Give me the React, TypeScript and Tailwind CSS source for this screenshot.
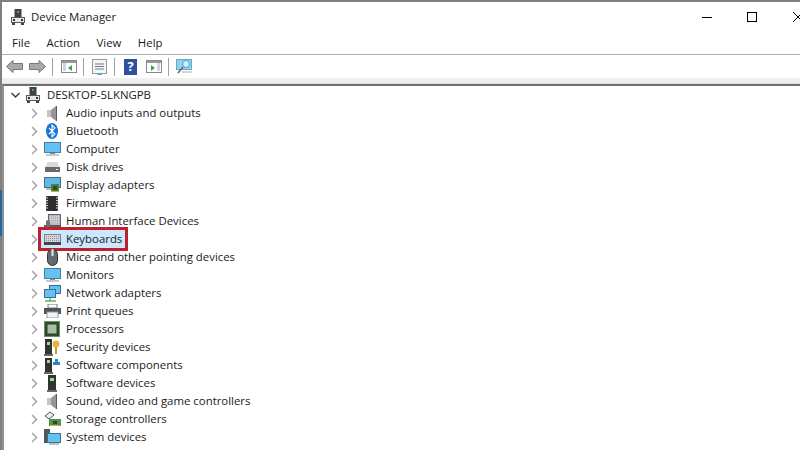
import type { ReactNode } from 'react';

function Chevron({ open }: { open?: boolean }) {
  return (
    <svg width="9" height="11" viewBox="0 0 9 11" fill="none" stroke={open ? '#404040' : '#a6a6a6'} strokeWidth="1.5">
      {open ? <path d="M0.5 3l4 4 4-4" /> : <path d="M2 1l4.5 4.5L2 10" />}
    </svg>
  );
}

function Pc() {
  return (
    <svg width="14" height="16" viewBox="0 0 14 16">
      <rect x="3.500" y="0" width="7" height="8" fill="#3c423c" />
      <rect x="6" y="2" width="2" height="2" fill="#6f8f6f" />
      <rect x="0.500" y="8.500" width="13" height="5" fill="#e6e6e6" stroke="#5a5a5a" />
      <rect x="2" y="10" width="2" height="2" fill="#333" />
      <rect x="10" y="10" width="2" height="2" fill="#333" />
      <rect x="1" y="14" width="3" height="2" fill="#444" />
      <rect x="10" y="14" width="3" height="2" fill="#444" />
    </svg>
  );
}

function DeviceIcon({ name }: { name: string }) {
  switch (name) {
    case 'audio':
    case 'sound':
      return (
        <svg width="12" height="17" viewBox="0 0 12 17">
          <rect x="1" y="5" width="4" height="7" fill="#c4c4c4" />
          <path d="M5 5l5-4v15l-5-4z" fill="#969696" />
          <path d="M10 1h1v15h-1z" fill="#5c5c5c" />
        </svg>
      );
    case 'bluetooth':
      return (
        <svg width="14" height="16" viewBox="0 0 14 16">
          <ellipse cx="7" cy="8" rx="6" ry="8" fill="#1474d4" />
          <path d="M4 5l6 6-3 3V2l3 3-6 6" fill="none" stroke="#fff" strokeWidth="1.1" />
        </svg>
      );
    case 'computer':
    case 'monitor':
      return (
        <svg width="17" height="14" viewBox="0 0 17 14">
          <rect x="0.500" y="0.500" width="16" height="10" fill="#63c2f3" stroke="#4a7c9c" />
          <rect x="6" y="11" width="5" height="1" fill="#888" />
          <rect x="2" y="12" width="13" height="2" fill="#c4cacd" />
        </svg>
      );
    case 'disk':
      return (
        <svg width="15" height="11" viewBox="0 0 15 11">
          <path d="M0.500 5l2-5h10l2 5z" fill="#dadada" />
          <rect x="0" y="5" width="15" height="5" fill="#6a6a6a" />
          <rect x="11" y="7" width="2" height="1" fill="#e8f8e8" />
        </svg>
      );
    case 'display':
      return (
        <svg width="17" height="16" viewBox="0 0 17 16">
          <rect x="0.500" y="0.500" width="16" height="10" fill="#5fb9e6" stroke="#3f7088" />
          <rect x="2" y="11" width="6" height="2" fill="#bbb" />
          <rect x="7" y="7" width="8" height="8" fill="#4f7f3f" />
          <rect x="9" y="9" width="4" height="4" fill="#2f4a22" />
          <rect x="7" y="14" width="8" height="1" fill="#c9a94a" />
        </svg>
      );
    case 'firmware':
      return (
        <svg width="14" height="15" viewBox="0 0 14 15">
          <rect x="1" y="0" width="12" height="15" rx="1" fill="#2e2e2e" />
          <path d="M1 2h2M1 4.500h2M1 7h2M1 9.500h2M1 12h2M11 2h2M11 4.500h2M11 7h2M11 9.500h2M11 12h2" stroke="#d8d8d8" />
        </svg>
      );
    case 'hid':
      return (
        <svg width="17" height="15" viewBox="0 0 17 15">
          <rect x="4.500" y="0.500" width="12" height="11" fill="#b4b9c0" stroke="#666" />
          <path d="M6 3h9M6 5.500h9M6 8h9" stroke="#eee" strokeDasharray="1 1" />
          <rect x="0" y="11" width="17" height="4" fill="#5a5a5a" />
          <rect x="2" y="6" width="4" height="8" rx="2" fill="#6f6f6f" />
        </svg>
      );
    case 'keyboard':
      return (
        <svg width="17" height="11" viewBox="0 0 17 11">
          <rect x="0.500" y="0.500" width="16" height="9" fill="#d4d7da" stroke="#808080" />
          <path d="M2 2.500h13M2 4.500h13M2 6.500h13" stroke="#8c9096" strokeDasharray="1 1" />
          <rect x="0" y="8" width="17" height="3" fill="#444" />
        </svg>
      );
    case 'mouse':
      return (
        <svg width="11" height="17" viewBox="0 0 11 17">
          <rect x="0.500" y="0.500" width="10" height="16" rx="5" fill="#646a70" stroke="#333" />
          <rect x="4.500" y="0" width="2" height="7" fill="#e8e8e8" />
        </svg>
      );
    case 'network':
      return (
        <svg width="17" height="17" viewBox="0 0 17 17">
          <rect x="5.500" y="0.500" width="11" height="8" fill="#63c2f3" stroke="#3c6f8f" />
          <rect x="0.500" y="4.500" width="11" height="8" fill="#63c2f3" stroke="#3c6f8f" />
          <path d="M6 13v3M1 16h11" stroke="#5bb85b" strokeWidth="1.500" />
        </svg>
      );
    case 'print':
      return (
        <svg width="17" height="14" viewBox="0 0 17 14">
          <rect x="4" y="0" width="9" height="4" fill="#fff" stroke="#777" />
          <rect x="0" y="4" width="17" height="6" fill="#4a5560" />
          <rect x="3" y="8" width="11" height="6" fill="#f4f4f4" stroke="#999" />
        </svg>
      );
    case 'processor':
      return (
        <svg width="16" height="16" viewBox="0 0 16 16">
          <rect x="0.500" y="0.500" width="15" height="15" fill="#2f4f2f" stroke="#6f8f5f" />
          <rect x="3" y="3" width="10" height="10" fill="#a9c0a0" stroke="#2f3f2f" />
        </svg>
      );
    case 'security':
      return (
        <svg width="16" height="17" viewBox="0 0 16 17">
          <rect x="1" y="0" width="7" height="15" fill="#333" />
          <rect x="3" y="3" width="3" height="3" fill="#8fe08f" />
          <rect x="0" y="15" width="9" height="2" fill="#666" />
          <circle cx="12" cy="5" r="3.500" fill="#e3b53c" />
          <rect x="11" y="8" width="2" height="7" fill="#c99a2e" />
        </svg>
      );
    case 'component':
      return (
        <svg width="16" height="17" viewBox="0 0 16 17">
          <rect x="1" y="1" width="7" height="14" fill="#333" />
          <rect x="3" y="3" width="3" height="3" fill="#8fe08f" />
          <rect x="0" y="15" width="9" height="2" fill="#666" />
          <path d="M9 5h7v3H9zM11 2h3v3h-3z" fill="#2d82c9" />
        </svg>
      );
    case 'software':
      return (
        <svg width="10" height="17" viewBox="0 0 10 17">
          <rect x="1" y="0" width="8" height="15" fill="#333" />
          <rect x="3" y="3" width="4" height="3" fill="#8fe08f" />
          <rect x="0" y="15" width="10" height="2" fill="#666" />
        </svg>
      );
    case 'storage':
      return (
        <svg width="17" height="16" viewBox="0 0 17 16">
          <path d="M1 5l5-4 4 3-5 4z" fill="#eee" stroke="#555" />
          <rect x="5" y="8" width="12" height="7" fill="#4f8f4f" />
          <rect x="9" y="10" width="4" height="3" fill="#2f4a22" />
          <rect x="6" y="14" width="10" height="1" fill="#d4b04a" />
        </svg>
      );
    default:
      return (
        <svg width="17" height="16" viewBox="0 0 17 16">
          <rect x="0" y="0" width="6" height="14" fill="#555" />
          <rect x="3.500" y="4.500" width="13" height="9" fill="#63c2f3" stroke="#3c6f8f" />
          <rect x="5" y="14" width="10" height="2" fill="#b9c0c4" />
        </svg>
      );
  }
}

const devices = [
  ['audio', 'Audio inputs and outputs'],
  ['bluetooth', 'Bluetooth'],
  ['computer', 'Computer'],
  ['disk', 'Disk drives'],
  ['display', 'Display adapters'],
  ['firmware', 'Firmware'],
  ['hid', 'Human Interface Devices'],
  ['keyboard', 'Keyboards'],
  ['mouse', 'Mice and other pointing devices'],
  ['monitor', 'Monitors'],
  ['network', 'Network adapters'],
  ['print', 'Print queues'],
  ['processor', 'Processors'],
  ['security', 'Security devices'],
  ['component', 'Software components'],
  ['software', 'Software devices'],
  ['sound', 'Sound, video and game controllers'],
  ['storage', 'Storage controllers'],
  ['system', 'System devices'],
];

function ToolBtn({ children }: { children: ReactNode }) {
  return <div className="flex h-[24px] w-[23px] items-center justify-center">{children}</div>;
}

function Sep() {
  return <div className="mr-[4px] ml-[3px] h-[18px] w-px bg-[#a0a0a0]" />;
}

export default function App() {
  return (
    <div className="flex h-[450px] w-[800px] overflow-hidden bg-white font-['Open_Sans',sans-serif] text-[11.400px] text-[#1a1a1a]">
      {/* Edge of the window with the desktop behind it */}
      <div className="flex w-[2px] shrink-0 flex-col bg-[#808080]">
        <div className="h-[190px] shrink-0" />
        <div className="h-[46px] shrink-0 bg-[#1f6aa5]" />
      </div>
      <div className="flex min-w-0 flex-1 flex-col border-t-2 border-t-[#808080]">
        {/* Title bar */}
        <div className="flex h-[30px] shrink-0 items-center pl-[9px]">
          <Pc />
          <span className="ml-[6px]">Device Manager</span>
          <div className="ml-auto flex items-center">
            <div className="mr-[35px] h-px w-[10px] bg-black" />
            <div className="mr-[36px] h-[10px] w-[10px] border border-black" />
            <svg width="10" height="10" viewBox="0 0 10 10" stroke="#000" fill="none" className="mr-[-3px]">
              <path d="M0 0l10 10M10 0L0 10" />
            </svg>
          </div>
        </div>
        {/* Menu */}
        <div className="flex h-[23px] shrink-0 items-center gap-[16.500px] border-b border-b-[#b0b0b0] pl-[10px]">
          <span>File</span>
          <span>Action</span>
          <span>View</span>
          <span>Help</span>
        </div>
        {/* Toolbar */}
        <div className="flex h-[23px] shrink-0 items-center pl-[1px]">
          <ToolBtn>
            <svg width="17" height="13" viewBox="0 0 17 13">
              <path d="M0.500 6.500L7 0.500v3h9.500v6H7v3z" fill="#a8a8a8" stroke="#777" />
            </svg>
          </ToolBtn>
          <ToolBtn>
            <svg width="17" height="13" viewBox="0 0 17 13">
              <path d="M16.500 6.500L10 0.500v3H0.500v6H10v3z" fill="#a8a8a8" stroke="#777" />
            </svg>
          </ToolBtn>
          <Sep />
          <ToolBtn>
            <svg width="16" height="13" viewBox="0 0 16 13">
              <rect x="0.500" y="0.500" width="15" height="12" fill="#fff" stroke="#888" />
              <rect x="1" y="1" width="14" height="2" fill="#999" />
              <path d="M5 4h-3M5 6h-3M5 8h-3M5 10h-3" stroke="#9ab" />
              <path d="M11 5v6L7 8z" fill="#3fa34d" />
            </svg>
          </ToolBtn>
          <Sep />
          <ToolBtn>
            <svg width="15" height="16" viewBox="0 0 15 16">
              <rect x="0.500" y="0.500" width="14" height="14" fill="#f5f5f5" stroke="#999" />
              <path d="M3 5h9M3 7.500h9M3 10h9" stroke="#778" />
              <rect x="5" y="14" width="5" height="2" fill="#4fb0d0" />
            </svg>
          </ToolBtn>
          <Sep />
          <ToolBtn>
            <div className="flex h-[16px] w-[13px] items-center justify-center bg-[#2f4f9f] text-[13px] font-bold text-white">?</div>
          </ToolBtn>
          <ToolBtn>
            <svg width="16" height="13" viewBox="0 0 16 13">
              <rect x="0.500" y="0.500" width="15" height="12" fill="#fff" stroke="#888" />
              <rect x="1" y="1" width="14" height="2" fill="#999" />
              <path d="M14 4h-3M14 6h-3M14 8h-3M14 10h-3" stroke="#9ab" />
              <path d="M5 5v6l4-3z" fill="#3fa34d" />
            </svg>
          </ToolBtn>
          <Sep />
          <ToolBtn>
            <svg width="17" height="16" viewBox="0 0 17 16">
              <rect x="0.500" y="0.500" width="15" height="10" fill="#8fd3f4" stroke="#6aa8c8" />
              <circle cx="10" cy="5" r="3.500" fill="#cdeefc" stroke="#5a9ac0" />
              <path d="M7 8L2 14" stroke="#666" strokeWidth="1.500" />
              <path d="M6 13h10" stroke="#aaa" />
            </svg>
          </ToolBtn>
        </div>
        <div className="h-[6px] shrink-0 border-b border-b-[#dcdcdc] bg-[#f0f0f0]" />
        {/* Tree */}
        <div className="min-h-0 flex-1 border-t-2 border-l-2 border-t-[#707070] border-l-[#909090] pl-[5px]">
          <div className="flex h-[18px] items-center">
            <span className="flex w-[13px] justify-center"><Chevron open /></span>
            <span className="ml-[2px] flex w-[18px] justify-center"><Pc /></span>
            <span className="ml-[5px]">DESKTOP-5LKNGPB</span>
          </div>
          {devices.map(([icon, label]) => {
            const selected = label === 'Keyboards';
            return (
              <div key={label} className="isolate flex h-[18px] items-center pl-[18px]">
                <span className="flex w-[14px] justify-center"><Chevron /></span>
                <span className="flex w-[22px] justify-center"><DeviceIcon name={icon} /></span>
                <span className="relative ml-[3px]">
                  {selected && (
                    <span className="absolute top-[-3px] right-[-6px] bottom-[-3px] left-[-28px] -z-10 border-[3px] border-[#c0202c] bg-[#cce8ff]" />
                  )}
                  {label}
                </span>
              </div>
            );
          })}
        </div>
      </div>
    </div>
  );
}
